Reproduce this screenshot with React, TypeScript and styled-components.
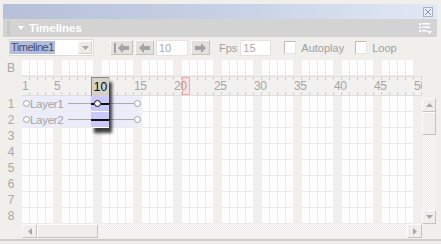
import React from 'react'
import styled, { createGlobalStyle } from 'styled-components'

const FRAME = 8
const FRAMES = 50
const CURRENT = 10
const END_MARK = 21
const ROWS = 8
const layers = ['Layer1', 'Layer2']

const GlobalStyle = createGlobalStyle`
  html, body {
    margin: 0;
    padding: 0;
    background: #f0efec;
  }
  body {
    font-family: 'Liberation Sans', Arial, sans-serif;
  }
`

const Window = styled.div`
  width: 441px;
  height: 244px;
  box-sizing: border-box;
  padding-top: 4px;
  background: #f0efec;
  display: flex;
  flex-direction: column;
  overflow: hidden;
`

const TitleBar = styled.div`
  height: 15px;
  margin: 0 4px 0 3px;
  background: linear-gradient(to right, #b6c0d8, #c9d2e6 55%, #e2e8f4);
  display: flex;
  align-items: center;
  justify-content: flex-end;
  padding-right: 4px;
`

const CloseBox = styled.span`
  width: 10px;
  height: 10px;
  box-sizing: border-box;
  border: 1px solid #a9b0be;
  background: #e8edf6;
  display: flex;
  align-items: center;
  justify-content: center;
`

const PanelHeader = styled.div`
  height: 18px;
  margin: 0 4px 0 3px;
  background: #d3d3d3;
  display: flex;
  align-items: center;
  padding: 0 5px 0 4px;
`

const Grip = styled.span`
  width: 3px;
  height: 15px;
  background: repeating-conic-gradient(#bcbcbc 0 25%, transparent 0 50%) 0 0 / 2px 2px;
`

const Caret = styled.span`
  margin-left: 8px;
  width: 0;
  height: 0;
  border-left: 3px solid transparent;
  border-right: 3px solid transparent;
  border-top: 4px solid #fff;
`

const PanelTitle = styled.span`
  margin-left: 5px;
  color: #fff;
  font-weight: bold;
  font-size: 11.5px;
`

const OptionsButton = styled.span`
  margin-left: auto;
  display: flex;
`

const Toolbar = styled.div`
  height: 21px;
  display: flex;
  align-items: center;
  padding-left: 9px;
  font-size: 11px;
  color: #a0a0a0;
`

const Select = styled.div`
  width: 85px;
  height: 17px;
  box-sizing: border-box;
  background: #fff;
  border: 1px solid #dcdbd8;
  display: flex;
  align-items: center;
  padding: 0 1px 0 0;
`

const SelectValue = styled.span`
  background: #b3bcdb;
  color: #474b68;
  font-size: 11px;
  letter-spacing: -0.5px;
  line-height: 13px;
  padding: 0 1px;
`

const DropButton = styled.span`
  margin-left: auto;
  width: 14px;
  height: 13px;
  box-sizing: border-box;
  background: #ecebe8;
  border: 1px solid;
  border-color: #f8f8f8 #d2d1ce #d2d1ce #f8f8f8;
  display: flex;
  align-items: center;
  justify-content: center;
`

const NavButton = styled.span<{ $w: number; $gap: number }>`
  width: ${p => p.$w}px;
  height: 15px;
  margin-left: ${p => p.$gap}px;
  box-sizing: border-box;
  background: #e2e1de;
  border: 1px solid;
  border-color: #f9f9f8 #c3c2bf #c3c2bf #f9f9f8;
  display: flex;
  align-items: center;
  justify-content: center;
`

const Field = styled.span<{ $w: number; $gap: number }>`
  width: ${p => p.$w}px;
  height: 16px;
  margin-left: ${p => p.$gap}px;
  box-sizing: border-box;
  background: #fff;
  border: 1px solid #e4e3e0;
  padding-left: 2px;
  line-height: 14px;
  font-size: 11px;
  color: #a8a8a8;
`

const ToolLabel = styled.span<{ $gap: number }>`
  margin-left: ${p => p.$gap}px;
  font-size: 11px;
  color: #a0a0a0;
`

const Checkbox = styled.span<{ $gap: number }>`
  margin-left: ${p => p.$gap}px;
  width: 12px;
  height: 13px;
  box-sizing: border-box;
  background: #fff;
  border: 1px solid;
  border-color: #bdbcb9 #e8e7e4 #e8e7e4 #bdbcb9;
`

const Body = styled.div`
  margin-top: 2px;
  display: grid;
  grid-template-columns: 22px ${FRAMES * FRAME}px 14px 1fr;
  grid-template-rows: 16px 20px repeat(${ROWS}, 16px) 14px;
`

const RowLabel = styled.div<{ $row: number }>`
  grid-column: 1;
  grid-row: ${p => p.$row};
  text-align: center;
  font-size: 12px;
  line-height: 16px;
  color: #a8a8a8;
`

const Track = styled.div<{ $row: number }>`
  grid-column: 2;
  grid-row: ${p => p.$row};
  display: flex;
  align-items: flex-start;
  background-color: #fff;
  background-image:
    linear-gradient(to right, transparent 31px, #f0efec 31px),
    linear-gradient(to right, transparent 7px, #ebebeb 7px),
    linear-gradient(to bottom, transparent 15px, #ebebeb 15px);
  background-size: 40px 100%, 8px 100%, 100% 16px;
`

const Ruler = styled.div`
  grid-column: 2;
  grid-row: 2;
  display: flex;
  box-sizing: border-box;
  border-top: 1px solid #e0dfdc;
  border-bottom: 1px solid #e0dfdc;
  background-color: #f2f1ef;
  background-image:
    linear-gradient(to right, transparent 7px, #cfcecb 7px),
    linear-gradient(to right, transparent 7px, #cfcecb 7px);
  background-size: 8px 3px, 8px 3px;
  background-position: 0 0, 0 100%;
  background-repeat: repeat-x;
  overflow: hidden;
`

const RulerCell = styled.span<{ $marked?: boolean }>`
  flex: none;
  width: ${FRAME}px;
  white-space: nowrap;
  overflow: visible;
  font-size: 12px;
  letter-spacing: -0.3px;
  line-height: 18px;
  color: #a6a6a6;
  box-sizing: border-box;
  background: ${p => (p.$marked ? '#fde0e0' : 'transparent')};
  box-shadow: ${p => (p.$marked ? 'inset 0 0 0 1px #f2a8a8' : 'none')};
`

const RulerText = styled.span`
  position: relative;
  z-index: 1;
`

const Playhead = styled.div`
  grid-column: 2;
  grid-row: 2 / 5;
  z-index: 2;
  width: 18px;
  margin-top: 1px;
  align-self: start;
  justify-self: start;
  display: flex;
  flex-direction: column;
  box-shadow: 3px 5px 3px rgba(0, 0, 0, 0.75);
`

const PlayheadHead = styled.div`
  height: 19px;
  box-sizing: border-box;
  background: #d5d1c9;
  border-top: 1px solid #8a8884;
  border-left: 1px solid #8a8884;
  text-align: center;
  font-size: 12px;
  line-height: 18px;
  color: #000;
`

const PlayheadRow = styled.div`
  height: 16px;
  box-sizing: border-box;
  background: #c9c9fa;
  border-bottom: 1px solid #fff;
  display: flex;
  align-items: center;
`

const InkLine = styled.span<{ $w?: number }>`
  flex: ${p => (p.$w ? 'none' : '1')};
  width: ${p => (p.$w ? `${p.$w}px` : 'auto')};
  height: 2px;
  background: #111;
`

const Keyframe = styled.span`
  flex: none;
  width: 7px;
  height: 7px;
  box-sizing: border-box;
  border: 1.5px solid #111;
  border-radius: 50%;
  background: #fff;
`

const LayerBar = styled.div<{ $frames: number }>`
  width: ${p => p.$frames * FRAME}px;
  height: 15px;
  box-sizing: border-box;
  padding: 0 1px;
  background: #ececfb;
  display: flex;
  align-items: center;
`

const SpanDot = styled.span`
  flex: none;
  width: 7px;
  height: 7px;
  box-sizing: border-box;
  border: 1px solid #a4a4a4;
  border-radius: 50%;
  background: #fff;
`

const LayerName = styled.span`
  width: 38px;
  font-size: 11.5px;
  letter-spacing: -0.3px;
  color: #a4a4a4;
  white-space: nowrap;
`

const SpanLine = styled.span`
  flex: 1;
  height: 1px;
  background: #aaa;
`

const VScroll = styled.div`
  grid-column: 3;
  grid-row: 3 / 11;
  margin-top: 2px;
  display: flex;
  flex-direction: column;
`

const HScroll = styled.div`
  grid-column: 2;
  grid-row: ${ROWS + 3};
  display: flex;
`

const ScrollButton = styled.span<{ $w?: number }>`
  flex: none;
  width: ${p => p.$w ?? 14}px;
  height: 14px;
  box-sizing: border-box;
  background: #efeeeb;
  border: 1px solid;
  border-color: #fbfbfb #c4c3c0 #c4c3c0 #fbfbfb;
  display: flex;
  align-items: center;
  justify-content: center;
`

const Thumb = styled.span<{ $len: number; $vertical?: boolean }>`
  flex: none;
  width: ${p => (p.$vertical ? '14px' : `${p.$len}px`)};
  height: ${p => (p.$vertical ? `${p.$len}px` : '14px')};
  box-sizing: border-box;
  background: #efeeeb;
  border: 1px solid;
  border-color: #fbfbfb #c4c3c0 #c4c3c0 #fbfbfb;
`

const ScrollTrack = styled.span`
  flex: 1;
  background: repeating-conic-gradient(#fafaf9 0 25%, #ebeae7 0 50%) 0 0 / 2px 2px;
`

const BottomEdge = styled.div`
  margin-top: 1px;
  height: 2px;
  background: #cdccc9;
`

function Arrow({ dir, bar }: { dir: 'left' | 'right'; bar?: boolean }) {
  const d = dir === 'left'
    ? 'M0 5 L5 0 V3 H11 V7 H5 V10 Z'
    : 'M11 5 L6 0 V3 H0 V7 H6 V10 Z'
  return (
    <svg width={bar ? 15 : 11} height="10" viewBox={bar ? '-4 0 15 10' : '0 0 11 10'}>
      {bar && <rect x="-4" y="0" width="2" height="10" fill="#a3a3a3" />}
      <path d={d} fill="#a3a3a3" />
    </svg>
  )
}

function Tri({ dir }: { dir: 'up' | 'down' | 'left' | 'right' }) {
  const pts = {
    up: '0,4 3.5,0 7,4',
    down: '0,0 7,0 3.5,4',
    left: '4,0 4,7 0,3.5',
    right: '0,0 4,3.5 0,7',
  }[dir]
  const vertical = dir === 'up' || dir === 'down'
  return (
    <svg width={vertical ? 7 : 4} height={vertical ? 4 : 7}>
      <polygon points={pts} fill="#a8a8a8" />
    </svg>
  )
}

export default function App() {
  const rulerLabel = (f: number) => (f === 1 || f % 5 === 0 ? String(f) : '')

  return (
    <>
      <GlobalStyle />
      <Window>
        <TitleBar>
          <CloseBox>
            <svg width="6" height="6">
              <path d="M0 0 L6 6 M6 0 L0 6" stroke="#8d95a6" strokeWidth="1" />
            </svg>
          </CloseBox>
        </TitleBar>

        <PanelHeader>
          <Grip />
          <Caret />
          <PanelTitle>Timelines</PanelTitle>
          <OptionsButton>
            <svg width="13" height="11">
              <g fill="#fff">
                <rect x="0" y="0" width="2" height="2" />
                <rect x="3" y="0" width="8" height="1.5" />
                <rect x="0" y="3.5" width="2" height="2" />
                <rect x="3" y="3.5" width="8" height="1.5" />
                <rect x="0" y="7" width="2" height="2" />
                <rect x="3" y="7" width="5" height="1.5" />
                <polygon points="8,8 13,8 10.5,11" />
              </g>
            </svg>
          </OptionsButton>
        </PanelHeader>

        <Toolbar>
          <Select>
            <SelectValue>Timeline1</SelectValue>
            <DropButton><Tri dir="down" /></DropButton>
          </Select>
          <NavButton $w={23} $gap={16}><Arrow dir="left" bar /></NavButton>
          <NavButton $w={19} $gap={2}><Arrow dir="left" /></NavButton>
          <Field $w={32} $gap={2}>10</Field>
          <NavButton $w={19} $gap={3}><Arrow dir="right" /></NavButton>
          <ToolLabel $gap={9}>Fps</ToolLabel>
          <Field $w={31} $gap={3}>15</Field>
          <Checkbox $gap={13} />
          <ToolLabel $gap={5}>Autoplay</ToolLabel>
          <Checkbox $gap={11} />
          <ToolLabel $gap={5}>Loop</ToolLabel>
        </Toolbar>

        <Body>
          <RowLabel $row={1}>B</RowLabel>
          <Track $row={1} />

          <Ruler>
            {Array.from({ length: FRAMES }, (_, i) => (
              <RulerCell key={i} $marked={i + 1 === END_MARK}>
                <RulerText>{rulerLabel(i + 1)}</RulerText>
              </RulerCell>
            ))}
          </Ruler>

          {Array.from({ length: ROWS }, (_, i) => (
            <React.Fragment key={i}>
              <RowLabel $row={i + 3}>{i + 1}</RowLabel>
              <Track $row={i + 3}>
                {layers[i] && (
                  <LayerBar $frames={15}>
                    <SpanDot />
                    <LayerName>{layers[i]}</LayerName>
                    <SpanLine />
                    <SpanDot />
                  </LayerBar>
                )}
              </Track>
            </React.Fragment>
          ))}

          <Playhead style={{ marginLeft: (CURRENT - 1) * FRAME - 3 }}>
            <PlayheadHead>{CURRENT}</PlayheadHead>
            <PlayheadRow>
              <InkLine $w={3} />
              <Keyframe />
              <InkLine />
            </PlayheadRow>
            <PlayheadRow>
              <InkLine />
            </PlayheadRow>
          </Playhead>

          <VScroll>
            <ScrollButton><Tri dir="up" /></ScrollButton>
            <Thumb $len={23} $vertical />
            <ScrollTrack />
            <ScrollButton><Tri dir="down" /></ScrollButton>
          </VScroll>

          <HScroll>
            <ScrollButton $w={15}><Tri dir="left" /></ScrollButton>
            <Thumb $len={61} />
            <ScrollTrack />
            <ScrollButton $w={15}><Tri dir="right" /></ScrollButton>
          </HScroll>
        </Body>
        <BottomEdge />
      </Window>
    </>
  )
}
